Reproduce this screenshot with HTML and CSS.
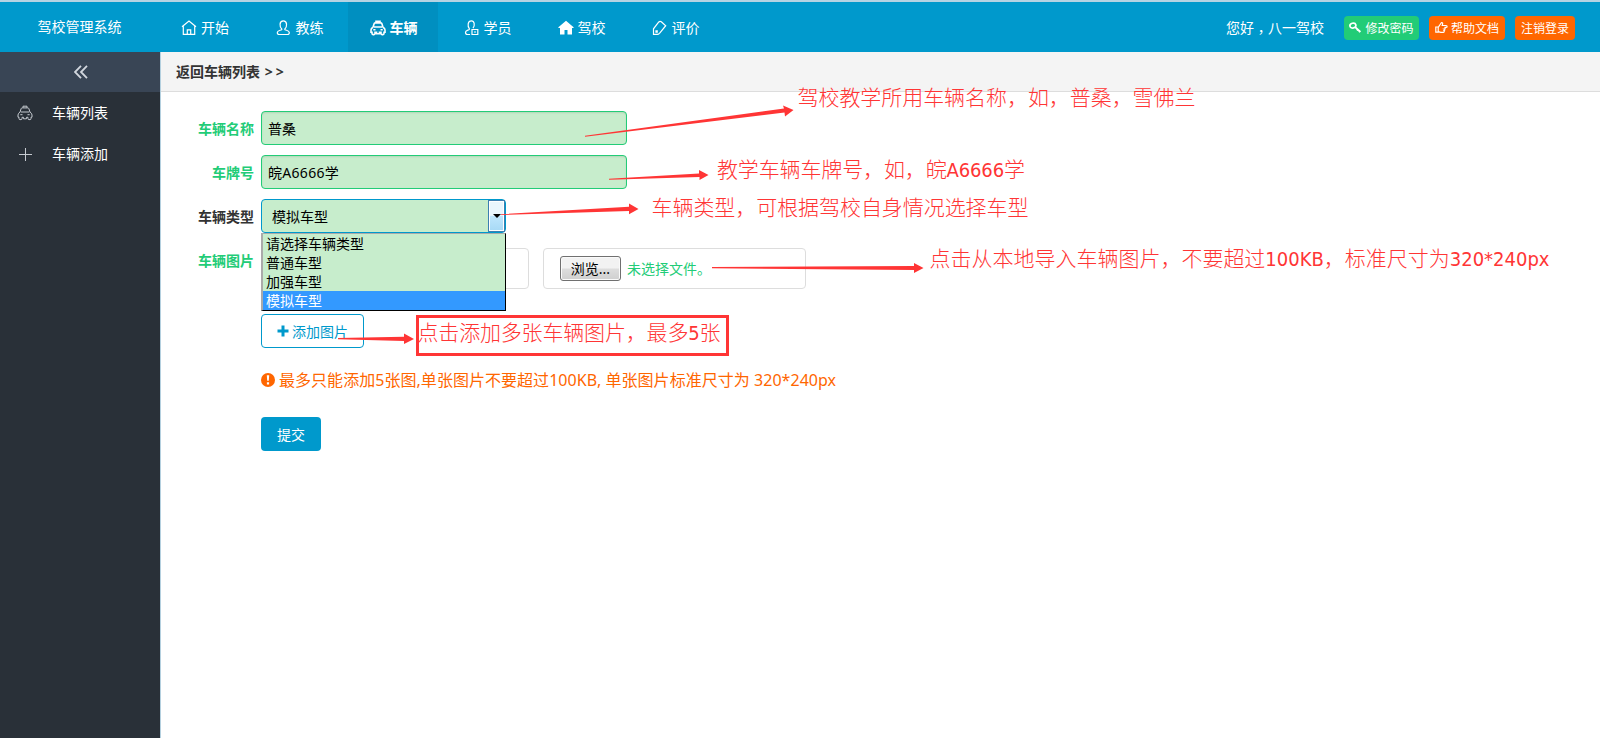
FILE: index.html
```html
<!DOCTYPE html>
<html lang="zh-CN">
<head>
<meta charset="utf-8">
<title>驾校管理系统</title>
<link rel="stylesheet" href="styles.css">
</head>
<body>
<svg class="defs" aria-hidden="true">
  <symbol id="car" viewBox="0 0 16 16"><path d="M6 2.800V1.200h4v1.600M3 7.200L4.100 3.700Q4.400 2.900 5.200 2.900h5.600q.8 0 1.100.8L13 7.200M3.800 7h8.400M3 7.200Q1 8.200 1 10v2.200h1v1.400q0 1 1 1h1q1 0 1-1v-1.300h1.500v1.500h3v-1.500H11v1.300q0 1 1 1h1q1 0 1-1v-1.400h1V10q0-1.800-2-2.800M3.300 9.700h2.200M10.500 9.700h2.200"/></symbol>
</svg>
<header class="top">
  <div class="brand">驾校管理系统</div>
  <nav class="nav">
    <a class="nav-item"><svg class="ico" viewBox="0 0 16 16"><path d="M1 6.8L8 1l7 5.800M2.300 6v8.400h11.400V6M6.300 14.400V9.800h3.400v4.600"/></svg><span>开始</span></a>
    <a class="nav-item"><svg class="ico" viewBox="0 0 16 16"><path d="M5.900 9.200C3.200 6.600 3.200.9 7.300.9s4.100 5.700 1.400 8.300c0 1.200 4.600 1 4.600 3.200 0 1.400-.6 2.100-2 2.100h-8c-1.400 0-2-.7-2-2.100 0-2.200 4.600-2 4.600-3.200z"/></svg><span>教练</span></a>
    <a class="nav-item active"><svg class="ico"><use href="#car"/></svg><span>车辆</span></a>
    <a class="nav-item"><svg class="ico" viewBox="0 0 16 16"><path d="M9 8.200C11.300 5 10.300.9 7.500.9 3.600.9 3.200 6 5.500 9c0 1.300-4 1-4 3.200 0 1.500.8 2.300 2 2.300h2.600M8 9.500h5.800v5H8zM10 12h2"/></svg><span>学员</span></a>
    <a class="nav-item"><svg class="ico" viewBox="0 0 16 16"><path class="solid" d="M8 .7l7.600 6.500v.8H14v6.500H9.500V10h-3v4.500H2V8H.4v-.8z"/></svg><span>驾校</span></a>
    <a class="nav-item"><svg class="ico" viewBox="0 0 16 16"><path d="M1.500 14.300V8.800L6.800 2Q8 .8 9.300 1.800L13.700 5.700 7.500 13.300Q6.500 14.300 5.300 14.300zM4 10.900h1.200v1.200H4z"/></svg><span>评价</span></a>
  </nav>
  <div class="user">
    <span class="hello">您好<span class="comma" lang="zh-TW">，</span>八一驾校</span>
    <a class="btn-s green"><svg class="ico-s" viewBox="0 0 13 13"><ellipse class="key" cx="3.900" cy="4.600" rx="3" ry="2.400" transform="rotate(-15 3.900 4.600)"/><path class="key" d="M6 6l5.500 4.800M7.800 9.300l1.500-1.500M9.800 11.200l1.500-1.500"/></svg><span>修改密码</span></a>
    <a class="btn-s orange"><svg class="ico-s" viewBox="0 0 13 13"><path d="M.8 6h2.400v5.200H.8zM3.200 6.300L6.500 1.500c1.300 0 1.500 1 .7 3H11c1.500 0 1.500 1.900 0 1.900H9.500c1 .3.900 1.600-.2 1.700.8.400.7 1.500-.3 1.600.5.600.2 1.700-.8 1.700H5.800l-2.600-.8"/></svg><span>帮助文档</span></a>
    <a class="btn-s orange"><span>注销登录</span></a>
  </div>
</header>
<div class="body">
  <aside class="side">
    <div class="fold"><svg viewBox="0 0 14 14"><path d="M7 .8L1 7l6 6.200M13 .8L7 7l6 6.200"/></svg></div>
    <a class="side-item"><svg class="ico"><use href="#car"/></svg><span>车辆列表</span></a>
    <a class="side-item"><svg class="ico" viewBox="0 0 16 16"><path d="M8.500 2v13M2 8.500h13"/></svg><span>车辆添加</span></a>
  </aside>
  <main class="main">
    <div class="crumb">返回车辆列表 <span class="gt">&gt;&gt;</span></div>
    <form class="form">
      <div class="row"><label>车辆名称</label><div class="input">普桑</div></div>
      <div class="row"><label>车牌号</label><div class="input plate">皖A6666学</div></div>
      <div class="row">
        <label class="dark">车辆类型</label>
        <div class="select">
          <span class="value">模拟车型</span><i class="drop"></i>
          <ul class="options"><li>请选择车辆类型</li><li>普通车型</li><li>加强车型</li><li class="on">模拟车型</li></ul>
        </div>
      </div>
      <div class="row files">
        <label>车辆图片</label>
        <div class="file"></div>
        <div class="file"><span class="browse">浏览...</span>未选择文件。</div>
      </div>
      <div class="extra">
        <a class="add"><svg viewBox="0 0 12 12"><path d="M4.500.5h3v4h4v3h-4v4h-3v-4h-4v-3h4z"/></svg><span>添加图片</span></a>
        <p class="tip"><svg viewBox="0 0 14 14"><circle cx="7" cy="7" r="7"/><path d="M5.800 2.300h2.400l-.4 5.500H6.200zM5.900 9.200h2.200v2.200H5.900z"/></svg><span>最多只能添加5张图,单张图片不要超过100KB, 单张图片标准尺寸为 320*240px</span></p>
        <a class="submit">提交</a>
      </div>
    </form>
  </main>
</div>
<svg class="notes" viewBox="0 0 1600 738">
  <rect x="417.500" y="316.500" width="310" height="38"/>
  <path d="M585 135.800L784 108.500 783 105.500 793.500 110 785 116.500 784.500 112.500 585 136.700z"/>
  <path d="M609 178.800L699 173.500V170L708.500 175 699.500 180V177L609 179.700z"/>
  <path d="M501 214.200L629 206.700V203.500L638.500 209 629 214.200V211L501 215z"/>
  <path d="M712 267L914 266V263L923.500 268 914 273V270L712 268.200z"/>
  <path d="M338 338L404 336.700V333.500L414 339 404 344V341L338 339.300z"/>
  <text x="797.500" y="105" textLength="398">驾校教学所用车辆名称，如，普桑，雪佛兰</text>
  <text x="717" y="177" textLength="308">教学车辆车牌号，如，皖<tspan>A6666</tspan>学</text>
  <text x="651.500" y="215" textLength="377">车辆类型，可根据驾校自身情况选择车型</text>
  <text x="929.500" y="266" textLength="620">点击从本地导入车辆图片，不要超过<tspan>100KB</tspan>，标准尺寸为<tspan>320*240px</tspan></text>
  <text x="417.500" y="340" textLength="303">点击添加多张车辆图片，最多<tspan>5</tspan>张</text>
</svg>
</body>
</html>
```
FILE: styles.css
```css
* { box-sizing: border-box; }
body {
  margin: 0;
  height: 738px;
  overflow: hidden;
  display: flex;
  flex-direction: column;
  position: relative;
  background: #fff;
  color: #333;
  font: 14px/20px "Noto Sans", "Noto Sans CJK SC", sans-serif;
}
svg { flex: none; display: block; }
.defs { position: absolute; width: 0; height: 0; }
.ico, .ico-s, .fold svg { fill: none; stroke: currentColor; stroke-width: 1.2; }
.ico { width: 16px; height: 16px; }
.ico .solid { fill: currentColor; stroke: none; }

.top {
  height: 52px;
  display: flex;
  align-items: center;
  background: #09c;
  border-top: 2px solid #b5d3e3;
  color: #fff;
}
.brand { width: 160px; padding-left: 37.5px; }
.nav { display: flex; gap: 4px; align-self: stretch; }
.nav-item { width: 90px; padding: 1px 0 0 21.5px; display: flex; align-items: center; gap: 4px; }
.nav-item:first-child { padding-left: 21px; }
.nav-item.active { background: #008fc0; font-weight: bold; }
.nav-item.active .ico { stroke-width: 1.6; }
.user { margin-left: auto; padding: 1px 25px 0 0; display: flex; align-items: center; }
.hello { margin-right: 20px; }
.comma { font-family: "Noto Sans CJK TC", sans-serif; line-height: 1; vertical-align: -4px; }
.btn-s {
  height: 24px;
  padding: 0 6px;
  display: flex;
  align-items: center;
  gap: 3px;
  border-radius: 4px;
  font-size: 12px;
}
.btn-s.green { padding: 0 5.5px; }
.btn-s span { padding-top: 2px; }
.btn-s + .btn-s { margin-left: 10px; }
.ico-s { width: 13px; height: 13px; }
.key { stroke-width: 1.7; }
.green { background: #2c7; }
.orange { background: #f60; }

.body { flex: 1; display: flex; }
.side { width: 160px; background: #293038; color: #fff; }
.fold { height: 40px; padding-left: 1px; display: flex; align-items: center; justify-content: center; background: #394555; color: #d2d7de; }
.fold svg { width: 14px; height: 14px; stroke-width: 1.8; }
.side-item { height: 41px; padding-left: 17px; display: flex; align-items: center; gap: 19px; }
.side-item .ico { color: #c5cad0; stroke-width: 1; }

.main { flex: 1; border-left: 1px solid #b4d0df; }
.crumb { height: 40px; padding: 10px 15px; background: #f4f4f4; border-bottom: 1px solid #ddd; font-weight: bold; }
.gt { margin-left: 1px; letter-spacing: 3px; }
.form { padding-top: 19px; }
.row { display: flex; margin-bottom: 10px; }
.row label { width: 93px; margin-right: 7px; padding-top: 8px; text-align: right; color: #2c7; font-weight: bold; }
.row label.dark { color: #333; }
.input, .select { height: 34px; border: 1px solid #2c7; border-radius: 4px; background: #c7edcc; color: #000; }
.input { width: 366px; padding: 7px 6px; box-shadow: inset 0 1px 2px rgba(0, 0, 0, .1); }
.plate { letter-spacing: .3px; }
.select { width: 245px; padding-left: 10px; display: flex; align-items: center; justify-content: space-between; border-color: #09c; position: relative; }
.value { padding-top: 2px; }
.drop { width: 17px; height: 32px; display: flex; align-items: center; justify-content: center; border: 1px solid #3c7fb1; box-shadow: inset 0 0 0 1px #fff; background: linear-gradient(#eaf6fd 48%, #bee6fd 50%, #a7d9f5); }
.drop::before { content: ""; border: 4px solid transparent; border-top-color: #000; border-bottom: 0; }
.options {
  position: absolute;
  left: -1px;
  top: 33px;
  z-index: 2;
  width: 245px;
  margin: 0;
  padding: 0;
  list-style: none;
  border: 1px solid #000;
  border-top-color: #aaa;
  border-left: 2px solid #aaa;
  background: #c7edcc;
}
.options li { height: 19px; padding-left: 3px; line-height: 19px; }
.options .on { background: #39f; color: #fff; }
.files { margin: 15px 0 0; }
.files label { padding-top: 3px; }
.file { height: 41px; margin-right: 14px; padding-left: 16px; display: flex; align-items: center; border: 1px solid #ddd; border-radius: 4px; color: #2c7; }
.file:nth-child(2) { width: 268px; }
.file:nth-child(3) { width: 263px; }
.browse { width: 61px; height: 25px; margin-right: 6px; border: 1px solid #707070; border-radius: 3px; box-shadow: inset 0 0 0 1px #fafafa; background: linear-gradient(#f2f2f2 48%, #ddd 52%, #cfcfcf); color: #000; text-align: center; line-height: 23px; }
.extra { padding: 25px 0 0 100px; display: flex; flex-direction: column; align-items: flex-start; }
.add { width: 103px; height: 34px; display: flex; align-items: center; justify-content: center; gap: 3px; border: 1px solid #09c; border-radius: 4px; color: #09c; }
.add svg { width: 12px; height: 12px; fill: currentColor; }
.add span { padding-top: 1px; }
.tip { margin: 20px 0 25px; display: flex; align-items: center; gap: 4px; color: #f60; font-size: 16px; line-height: 24px; letter-spacing: .04px; }
.tip svg { width: 14px; height: 14px; fill: currentColor; }
.tip path { fill: #fff; }
.submit { width: 60px; height: 34px; border-radius: 4px; background: #09c; color: #fff; line-height: 35px; text-align: center; }

.notes { position: absolute; inset: 0; z-index: 3; width: 1600px; height: 738px; fill: #ff3535; font-size: 21px; font-weight: 300; }
.notes tspan { font-family: "DejaVu Sans Condensed", "Noto Sans", sans-serif; font-size: 20px; font-weight: 400; }
.notes rect { fill: none; stroke: #ff3535; stroke-width: 3; }
```
